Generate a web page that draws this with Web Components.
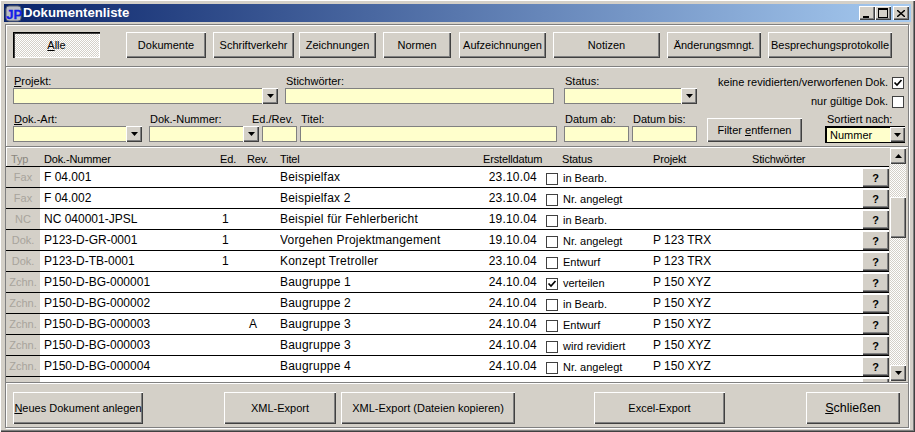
<!DOCTYPE html>
<html lang="de"><head><meta charset="utf-8"><title>Dokumentenliste</title>
<style>
html,body{margin:0;padding:0;background:#d4d0c8}
body{font:11px/13px "Liberation Sans",sans-serif;color:#000;width:915px;height:432px;overflow:hidden}
</style></head><body>
<doc-window></doc-window>
<script>
const FONT='"Liberation Sans",sans-serif';
const raised='box-shadow:inset 1px 1px 0 #fff,inset -1px -1px 0 #404040,inset -2px -2px 0 #808080;background:#d4d0c8;';
function u(s){return s.replace(/_(.)/g,'<u>$1</u>');}

class WinBtn extends HTMLElement{constructor(){super();const r=this.attachShadow({mode:'open'});
r.innerHTML=`<style>:host{display:flex;box-sizing:border-box;width:var(--w,80px);height:var(--h,26px);align-items:center;justify-content:center;${raised}font-size:var(--fs,11px);white-space:nowrap;color:#000}
:host([pressed]){box-shadow:inset 1px 1px 0 #000,inset 2px 2px 0 #404040,inset -1px -1px 0 #fff;background:repeating-conic-gradient(#fff 0 25%,#d4d0c8 0 50%) 0 0/2px 2px}
u{text-decoration:underline}</style><span id="t"></span>`;}
connectedCallback(){this.style.setProperty('--w',(this.getAttribute('w')||80)+'px');if(this.hasAttribute('h'))this.style.setProperty('--h',this.getAttribute('h')+'px');
this.shadowRoot.getElementById('t').innerHTML=u(this.getAttribute('label')||'');}}
customElements.define('win-btn',WinBtn);

class WinField extends HTMLElement{constructor(){super();const r=this.attachShadow({mode:'open'});
r.innerHTML=`<style>:host{display:flex;flex-direction:column;width:var(--w);flex:none}
#l{height:14px;line-height:15px;white-space:nowrap;padding-left:1px;margin-left:var(--lo,0)}
#b{box-sizing:border-box;height:16px;background:#ffc;border:1px solid #808080;display:flex;justify-content:flex-end}
#a{display:none;width:16px;height:16px;margin:-1px -1px 0 0;${raised}align-items:center;justify-content:center;flex:none}
:host([combo]) #a{display:flex}
:host([dark]) #b{border:1px solid #000;border-top:2px solid #000;border-left:2px solid #000;height:17px}
:host([dark]) #a{margin:-1px -1px 0 0;height:15px;width:15px}
:host([dark]) #l{padding-left:2px}
#v{flex:1;padding-left:3px;line-height:15px}
</style><div id="l"></div><div id="b"><span id="v"></span><span id="a"><svg width="7" height="4" viewBox="0 0 7 4"><path d="M0 0h7L3.5 4z" fill="#000"/></svg></span></div>`;}
connectedCallback(){this.style.setProperty('--w',this.getAttribute('w')+'px');const s=this.shadowRoot;
s.getElementById('l').innerHTML=u(this.getAttribute('label')||'&nbsp;');s.getElementById('v').textContent=this.getAttribute('value')||'';}}
customElements.define('win-field',WinField);

class WinCheck extends HTMLElement{constructor(){super();const r=this.attachShadow({mode:'open'});
r.innerHTML=`<style>:host{display:inline-block;width:10px;height:10px;background:#fff;border:1px solid #404040;box-sizing:content-box;flex:none;line-height:0}
svg{display:none}:host([on]) svg{display:block}</style><svg width="10" height="10" viewBox="0 0 10 10"><path d="M1.5 4.5l2.5 2.5L8.5 2" fill="none" stroke="#000" stroke-width="1.7"/></svg>`;}}
customElements.define('win-check',WinCheck);

class ListRow extends HTMLElement{constructor(){super();const r=this.attachShadow({mode:'open'});
r.innerHTML=`<style>:host{display:grid;grid-template-columns:34px 180px 27px 33px 198px 61px 23px 91px 1fr 27px;height:21px;box-sizing:border-box;font-size:12px;white-space:nowrap}
.c{border-top:1px solid #000;background:#fff;line-height:21px;overflow:hidden}
.t{background:#d4d0c8;color:#a8a49c;font-size:11px;text-align:center;line-height:20px}
.n{padding-left:4px}.ed{padding-left:2px}.d{text-align:right;padding-right:2px;letter-spacing:.2px}
#ti{letter-spacing:.2px}
.ck{display:flex;align-items:center;padding-top:3px;padding-left:7px;box-sizing:border-box}
.s{font-size:11px;padding-top:2px;padding-left:1px;line-height:19px}
.q{border-top:1px solid #000;background:#fff;display:flex}
.q b{display:flex;align-items:center;justify-content:center;width:27px;height:19px;margin-top:1px;${raised}font:bold 11px ${FONT};}
</style><div class="c t" id="t"></div><div class="c n" id="n"></div><div class="c ed" id="e"></div><div class="c ed" id="r"></div><div class="c" id="ti"></div><div class="c d" id="d"></div><div class="c ck"><win-check id="k"></win-check></div><div class="c s" id="s"></div><div class="c" id="p"></div><div class="q"><b id="q">?</b></div>`;}
set data(a){const s=this.shadowRoot,ids=['t','n','e','r','ti','d','s','p'];ids.forEach((id,i)=>s.getElementById(id).textContent=a[i]||'');if(a[8])s.getElementById('k').setAttribute('on','');}}
customElements.define('list-row',ListRow);

class ScrollBar extends HTMLElement{constructor(){super();const r=this.attachShadow({mode:'open'});
const b=`width:16px;height:16px;flex:none;${raised}box-sizing:border-box;display:flex;align-items:center;justify-content:center`;
r.innerHTML=`<style>:host{display:flex;flex-direction:column;width:16px;height:233px;margin-left:1px;background:repeating-conic-gradient(#fff 0 25%,#d4d0c8 0 50%) 0 0/2px 2px}
.b{${b}}.th{width:16px;height:41px;margin-top:33px;${raised}flex:none}.sp{flex:1}</style>
<div class="b"><svg width="7" height="4" viewBox="0 0 7 4"><path d="M3.5 0L7 4H0z"/></svg></div><div class="th"></div><div class="sp"></div><div class="b"><svg width="7" height="4" viewBox="0 0 7 4"><path d="M0 0h7L3.5 4z"/></svg></div>`;}}
customElements.define('scroll-bar',ScrollBar);

class DocList extends HTMLElement{constructor(){super();const r=this.attachShadow({mode:'open'});
r.innerHTML=`<style>:host{display:flex;height:234px}
#m{width:883px;display:flex;flex-direction:column;overflow:hidden}
#h{display:grid;grid-template-columns:34px 180px 27px 33px 203px 79px 91px 99px 1fr;height:18px;box-sizing:border-box;padding-top:5px;line-height:13px;flex:none;white-space:nowrap;letter-spacing:-.15px}
#h span:first-child{color:#8a867e;padding-left:5px}
#h .k{padding-left:4px}
#rows{flex:1;overflow:hidden}
</style><div id="m"><div id="h"><span>Typ</span><span class="k">Dok.-Nummer</span><span>Ed.</span><span>Rev.</span><span>Titel</span><span>Erstelldatum</span><span>Status</span><span>Projekt</span><span>Stichwörter</span></div><div id="rows"></div></div><scroll-bar></scroll-bar>`;
const data=[
['Fax','F 04.001','','','Beispielfax','23.10.04','in Bearb.',''],
['Fax','F 04.002','','','Beispielfax 2','23.10.04','Nr. angelegt',''],
['NC','NC 040001-JPSL','1','','Beispiel für Fehlerbericht','19.10.04','in Bearb.',''],
['Dok.','P123-D-GR-0001','1','','Vorgehen Projektmangement','19.10.04','Nr. angelegt','P 123 TRX'],
['Dok.','P123-D-TB-0001','1','','Konzept Tretroller','23.10.04','Entwurf','P 123 TRX'],
['Zchn.','P150-D-BG-000001','','','Baugruppe 1','24.10.04','verteilen','P 150 XYZ',1],
['Zchn.','P150-D-BG-000002','','','Baugruppe 2','24.10.04','in Bearb.','P 150 XYZ'],
['Zchn.','P150-D-BG-000003','','A','Baugruppe 3','24.10.04','Entwurf','P 150 XYZ'],
['Zchn.','P150-D-BG-000003','','','Baugruppe 3','24.10.04','wird revidiert','P 150 XYZ'],
['Zchn.','P150-D-BG-000004','','','Baugruppe 4','24.10.04','Nr. angelegt','P 150 XYZ']];
const box=r.getElementById('rows');data.forEach(d=>{const e=document.createElement('list-row');box.appendChild(e);e.data=d;});
const last=document.createElement('list-row');box.appendChild(last);last.shadowRoot.getElementById('k').style.visibility='hidden';last.shadowRoot.getElementById('q').textContent='';}}
customElements.define('doc-list',DocList);

class DocWindow extends HTMLElement{constructor(){super();const r=this.attachShadow({mode:'open'});
const btns=[['_Alle',87,1],['Dokumente',80],['Schriftverkehr',81],['Zeichnungen',77],['Normen',68],['Aufzeichnungen',87],['Notizen',107],['Änderungsmngt.',94],['Besprechungsprotokolle',124]];
const gaps=[26,7,5,7,8,7,7,7,0];
r.innerHTML=`<style>
:host{display:block;box-sizing:border-box;width:915px;height:432px;background:#d4d0c8;padding:4px 4px 3px 4px;box-shadow:inset 1px 1px 0 #fff,inset -1px -1px 0 #404040,inset -2px -2px 0 #808080;overflow:hidden}
#tb{height:18px;background:linear-gradient(90deg,#0a246a,#a6caf0);display:flex;align-items:center;color:#fff;font:bold 13.2px/18px ${FONT};padding-left:1px;gap:1px}
#tb .g{margin-left:auto;display:flex;margin-right:2px}
.cb{width:16px;height:14px;box-sizing:border-box;${raised}display:flex;align-items:center;justify-content:center}
.cb:last-child{margin-left:2px}
#in{box-sizing:border-box;height:404px;width:904px;margin:2px 0 0 1px;border:1px solid #808080;box-shadow:inset 1px 1px 0 #fff,1px 1px 0 #fff}
#top{display:flex;padding:7px 0 0 7px;height:26px}
.sep{height:2px;background:linear-gradient(#808080 50%,#fff 50%);margin:8px 0 0}
#f1,#f2{display:flex;padding-left:7px}
#f1{margin-top:6px;height:31px}
#f2{margin-top:7px;height:31px}
#chk{margin-left:21px;display:flex;flex-direction:column;gap:6px;align-items:flex-end;width:186px;margin-top:2px}
#chk div{display:flex;gap:4px;align-items:center;height:13px;white-space:nowrap}
#fb{align-self:flex-end;margin-bottom:1px}
#bot{display:flex;padding:9px 0 0 7px;border-top:1px solid #808080;box-shadow:inset 0 1px 0 #fff;}
</style>
<div id="tb"><svg width="17" height="17" viewBox="0 0 17 17"><rect x="1" y="1" width="15" height="15" rx="3" fill="#b9bcc4" stroke="#5d6270"/><text x="1.2" y="13.5" font-family="Liberation Sans" font-size="13" fill="#1420e8" stroke="#1420e8" stroke-width=".3">JP</text></svg><span>Dokumentenliste</span>
<span class="g"><span class="cb"><svg width="8" height="9"><path d="M0 7h6v2H0z"/></svg></span><span class="cb"><svg width="10" height="10"><path d="M0 0h10v10H0zM1 2v7h8V2z" fill-rule="evenodd"/></svg></span><span class="cb"><svg width="8" height="7" viewBox="0 0 8 7"><path d="M0 0l8 7M8 0L0 7" stroke="#000" stroke-width="1.4"/></svg></span></span></div>
<div id="in">
<div id="top">${btns.map((b,i)=>`<win-btn w="${b[1]}" label="${b[0]}"${b[2]?' pressed':''} style="margin-right:${gaps[i]}px"></win-btn>`).join('')}</div>
<div class="sep"></div>
<div id="f1"><win-field w="265" combo label="_Projekt:" style="margin-right:7px"></win-field><win-field w="269" label="Stichwörter:" style="margin-right:10px"></win-field><win-field w="133" combo label="Status:"></win-field>
<div id="chk"><div>keine revidierten/verworfenen Dok. <win-check on></win-check></div><div><span>nur <u>g</u>ültige Dok.</span> <win-check></win-check></div></div></div>
<div id="f2"><win-field w="129" combo label="_Dok.-Art:" style="margin-right:7px"></win-field><win-field w="110" combo label="Dok.-Nummer:" style="margin-right:3px"></win-field><win-field w="35" label="Ed./Rev." style="margin-right:3px;--lo:-11px"></win-field><win-field w="257" label="Titel:" style="margin-right:7px"></win-field><win-field w="65" label="Datum ab:" style="margin-right:3px"></win-field><win-field w="65" label="Datum bis:" style="margin-right:10px"></win-field>
<win-btn id="fb" w="95" h="24" label="Filter _entfernen" style="margin-right:23px"></win-btn><win-field w="80" combo dark label="Sortiert nach:" value="Nummer"></win-field></div>
<div class="sep" style="margin-top:3px"></div>
<doc-list></doc-list>
<div id="bot"><win-btn w="130" h="32" label="_Neues Dokument anlegen" style="margin-right:81px"></win-btn><win-btn w="112" h="32" label="XML-Export" style="margin-right:5px"></win-btn><win-btn w="174" h="32" label="XML-Export (Dateien kopieren)" style="margin-right:79px"></win-btn><win-btn w="131" h="32" label="Excel-Export" style="margin-right:81px"></win-btn><win-btn w="94" h="32" label="_Schließen" style="--fs:12.5px"></win-btn></div>
</div>`;}}
customElements.define('doc-window',DocWindow);
</script>
</body></html>
